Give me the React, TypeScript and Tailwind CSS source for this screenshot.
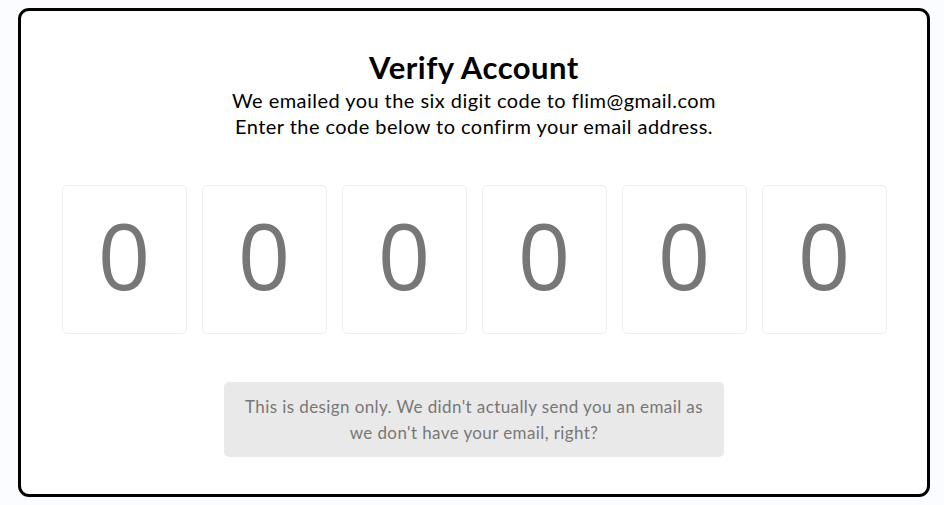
const digits = ["0", "0", "0", "0", "0", "0"];

const App = () => {
  return (
    <div className="min-h-[505px] w-full bg-[#fbfcff] pt-[8px] pl-[18px]">
      <div className="w-[912px] h-[489px] bg-white border-[3px] border-black rounded-[11px] flex flex-col items-center font-['Lato',sans-serif] text-black">
        <h1 className="mt-[36px] text-[31px] leading-[40px] font-bold tracking-[0.5px]">
          Verify Account
        </h1>
        <p className="text-[20px] leading-[26px] tracking-[0.45px]">
          We emailed you the six digit code to flim@gmail.com
        </p>
        <p className="text-[20px] leading-[26px] tracking-[0.45px]">
          Enter the code below to confirm your email address.
        </p>
        <div className="mt-[46px] flex gap-[15px]">
          {digits.map((d, i) => (
            <div
              key={i}
              className="w-[125px] h-[149px] pb-[10px] border border-[#eeeeee] rounded-[5px] flex items-center justify-center font-['Open_Sans',sans-serif] text-[92px] text-[#777777]"
            >
              {d}
            </div>
          ))}
        </div>
        <div className="mt-[48px] w-[500px] h-[75px] bg-[#e9e9e9] rounded-[5px] flex items-center justify-center px-[20px] text-center text-[17px] leading-[26px] tracking-[0.4px] text-[#777777]">
          This is design only. We didn't actually send you an email as we don't
          have your email, right?
        </div>
      </div>
    </div>
  );
};

export default App;
